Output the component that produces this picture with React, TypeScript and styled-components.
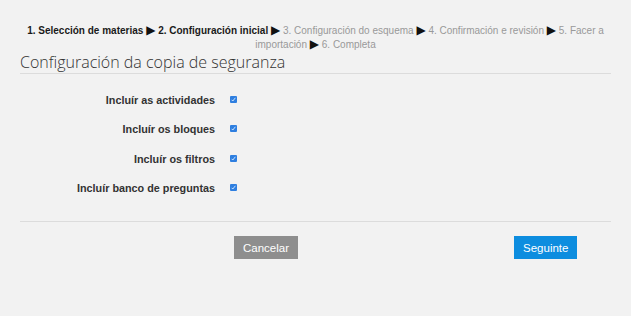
import React from "react";
import styled, { createGlobalStyle } from "styled-components";

const Global = createGlobalStyle`
  html, body { margin: 0; padding: 0; background: #f2f2f2; }
  body { font-family: "Liberation Sans", Arial, sans-serif; color: #333; }
`;

const Page = styled.div`
  width: 631px;
  height: 316px;
  box-sizing: border-box;
  padding: 24px 20px 0;
  background: #f2f2f2;
`;

const Progress = styled.div`
  text-align: center;
  font-size: 10px;
  line-height: 14px;
  padding: 0 4px;
`;

const Step = styled.span<{ $done?: boolean }>`
  color: ${(p) => (p.$done ? "#1a1a1a" : "#999")};
  font-weight: ${(p) => (p.$done ? 700 : 400)};
`;

const Arrow = styled.span`
  font-family: "DejaVu Sans", sans-serif;
  color: #111;
  font-size: 12px;
  line-height: 10px;
`;

const Heading = styled.h2`
  margin: 0;
  font-family: "Open Sans", sans-serif;
  font-weight: 300;
  font-size: 16px;
  line-height: 20px;
  color: #333;
  border-bottom: 1px solid #dcdcdc;
  padding-bottom: 1px;
`;

const Form = styled.div`
  display: grid;
  grid-template-columns: 210px 1fr;
  padding-top: 18px;
`;

const Label = styled.label`
  text-align: right;
  padding-right: 15px;
  font-size: 10.8px;
  font-weight: 700;
  color: #333;
  height: 29.3px;
  line-height: 16px;
`;

const CheckCell = styled.div`
  padding-top: 4px;
`;

const Check = styled.span`
  display: block;
  width: 7px;
  height: 7px;
  border-radius: 1px;
  background: #2f7fe0;
  position: relative;
`;

const Mark = styled.svg`
  position: absolute;
  left: 1px;
  top: 1px;
`;

const Divider = styled.div`
  border-top: 1px solid #dcdcdc;
  margin-top: 12px;
`;

const Buttons = styled.div`
  display: flex;
  padding-top: 14px;
  padding-left: 214px;
`;

const Button = styled.button<{ $primary?: boolean }>`
  height: 23px;
  border: none;
  border-radius: 0;
  font-family: "Liberation Sans", Arial, sans-serif;
  font-size: 11.5px;
  color: #fff;
  padding: 0 9px;
  background: ${(p) => (p.$primary ? "#0d8ddf" : "#8e8e8e")};
  margin-left: ${(p) => (p.$primary ? "216px" : "0")};
`;

const rows = [
  "Incluír as actividades",
  "Incluír os bloques",
  "Incluír os filtros",
  "Incluír banco de preguntas",
];

function Checkbox() {
  return (
    <Check>
      <Mark width="5" height="5" viewBox="0 0 5 5">
        <path d="M0.6 2.8 L1.8 4 L4.4 0.8" stroke="#dfeeff" strokeWidth="0.9" fill="none" />
      </Mark>
    </Check>
  );
}

export default function App() {
  return (
    <Page>
      <Global />
      <Progress>
        <Step $done>1. Selección de materias</Step> <Arrow>▶</Arrow>{" "}
        <Step $done>2. Configuración inicial</Step> <Arrow>▶</Arrow>{" "}
        <Step>3. Configuración do esquema</Step> <Arrow>▶</Arrow>{" "}
        <Step>4. Confirmación e revisión</Step> <Arrow>▶</Arrow>{" "}
        <Step>5. Facer a importación</Step> <Arrow>▶</Arrow>{" "}
        <Step>6. Completa</Step>
      </Progress>
      <Heading>Configuración da copia de seguranza</Heading>
      <Form>
        {rows.map((r) => (
          <React.Fragment key={r}>
            <Label>{r}</Label>
            <CheckCell>
              <Checkbox />
            </CheckCell>
          </React.Fragment>
        ))}
      </Form>
      <Divider />
      <Buttons>
        <Button>Cancelar</Button>
        <Button $primary>Seguinte</Button>
      </Buttons>
    </Page>
  );
}
